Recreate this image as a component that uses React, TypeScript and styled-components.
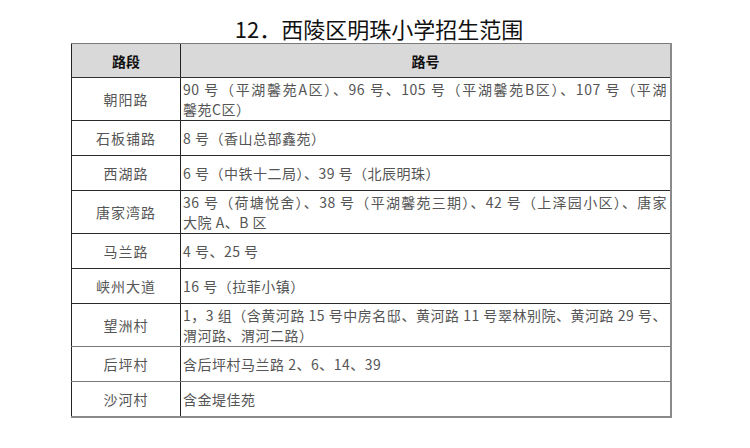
import React from "react";
import styled, { createGlobalStyle } from "styled-components";

const Global = createGlobalStyle`
  html, body { margin: 0; padding: 0; background: #ffffff; }
  body { font-family: "Noto Sans CJK SC", "Noto Sans", sans-serif; }
`;

const Page = styled.div`
  width: 750px;
  height: 448px;
  background: #ffffff;
  overflow: hidden;
`;

const Title = styled.h1`
  margin: 0;
  padding: 16px 0 3px 8px;
  height: 24px;
  line-height: 24px;
  font-size: 22px;
  font-weight: 400;
  color: #111;
  text-align: center;
`;

const Table = styled.table`
  margin-left: 71px;
  width: 601px;
  border-collapse: collapse;
  table-layout: fixed;
  border-left: 1px solid #222;
  border-right: 2px solid #8a8a8a;
  border-bottom: 2px solid #8a8a8a;
`;

const HeadCell = styled.th<{ $w?: number }>`
  ${(p) => (p.$w ? `width: ${p.$w}px;` : "")}
  height: 33px;
  padding: 0;
  background: #d9d9d9;
  border-top: 1px solid #7a7a7a;
  border-bottom: 1px solid #333;
  border-left: 1px solid #222;
  font-size: 14px;
  font-weight: 700;
  color: #111;
  text-align: center;
  vertical-align: middle;
`;

const Row = styled.tr<{ $light?: boolean }>`
  & > td {
    border-bottom: 1px solid ${(p) => (p.$light ? "#777" : "#2a2a2a")};
  }
`;

const NameCell = styled.td`
  height: 32px;
  padding: 1px 0;
  border-left: 1px solid #222;
  font-size: 14px;
  line-height: 20px;
  color: #555;
  text-align: center;
  vertical-align: middle;
  letter-spacing: 1px;
  white-space: nowrap;
`;

const ValueCell = styled.td`
  height: 32px;
  padding: 1px 3px 1px 2px;
  border-left: 1px solid #222;
  font-size: 14px;
  line-height: 20px;
  color: #555;
  text-align: left;
  vertical-align: middle;
  letter-spacing: 0.5px;
`;

const Line = styled.span<{ $full?: boolean }>`
  display: block;
  white-space: nowrap;
  ${(p) =>
    p.$full
      ? `text-align: justify; text-align-last: justify; text-justify: inter-character; white-space: normal;`
      : ""}
`;

type Item = { name: string; lines: string[]; light?: boolean };

const rows: Item[] = [
  {
    name: "朝阳路",
    lines: [
      "90 号（平湖馨苑A区）、96 号、105 号（平湖馨苑B区）、107 号（平湖",
      "馨苑C区）",
    ],
  },
  { name: "石板铺路", lines: ["8 号（香山总部鑫苑）"] },
  { name: "西湖路", lines: ["6 号（中铁十二局）、39 号（北辰明珠）"] },
  {
    name: "唐家湾路",
    lines: [
      "36 号（荷塘悦舍）、38 号（平湖馨苑三期）、42 号（上泽园小区）、唐家",
      "大院 A、B 区",
    ],
  },
  { name: "马兰路", lines: ["4 号、25 号"] },
  { name: "峡州大道", lines: ["16 号（拉菲小镇）"] },
  {
    name: "望洲村",
    lines: [
      "1，3 组（含黄河路 15 号中房名邸、黄河路 11 号翠林别院、黄河路 29 号、",
      "渭河路、渭河二路）",
    ],
    light: true,
  },
  { name: "后坪村", lines: ["含后坪村马兰路 2、6、14、39"], light: true },
  { name: "沙河村", lines: ["含金堤佳苑"], light: true },
];

export default function App() {
  return (
    <Page>
      <Global />
      <Title>12．西陵区明珠小学招生范围</Title>
      <Table>
        <thead>
          <tr>
            <HeadCell $w={108}>路段</HeadCell>
            <HeadCell>路号</HeadCell>
          </tr>
        </thead>
        <tbody>
          {rows.map((r) => (
            <Row key={r.name} $light={r.light}>
              <NameCell>{r.name}</NameCell>
              <ValueCell>
                {r.lines.map((l, i) => (
                  <Line key={i} $full={i < r.lines.length - 1}>
                    {l}
                  </Line>
                ))}
              </ValueCell>
            </Row>
          ))}
        </tbody>
      </Table>
    </Page>
  );
}
